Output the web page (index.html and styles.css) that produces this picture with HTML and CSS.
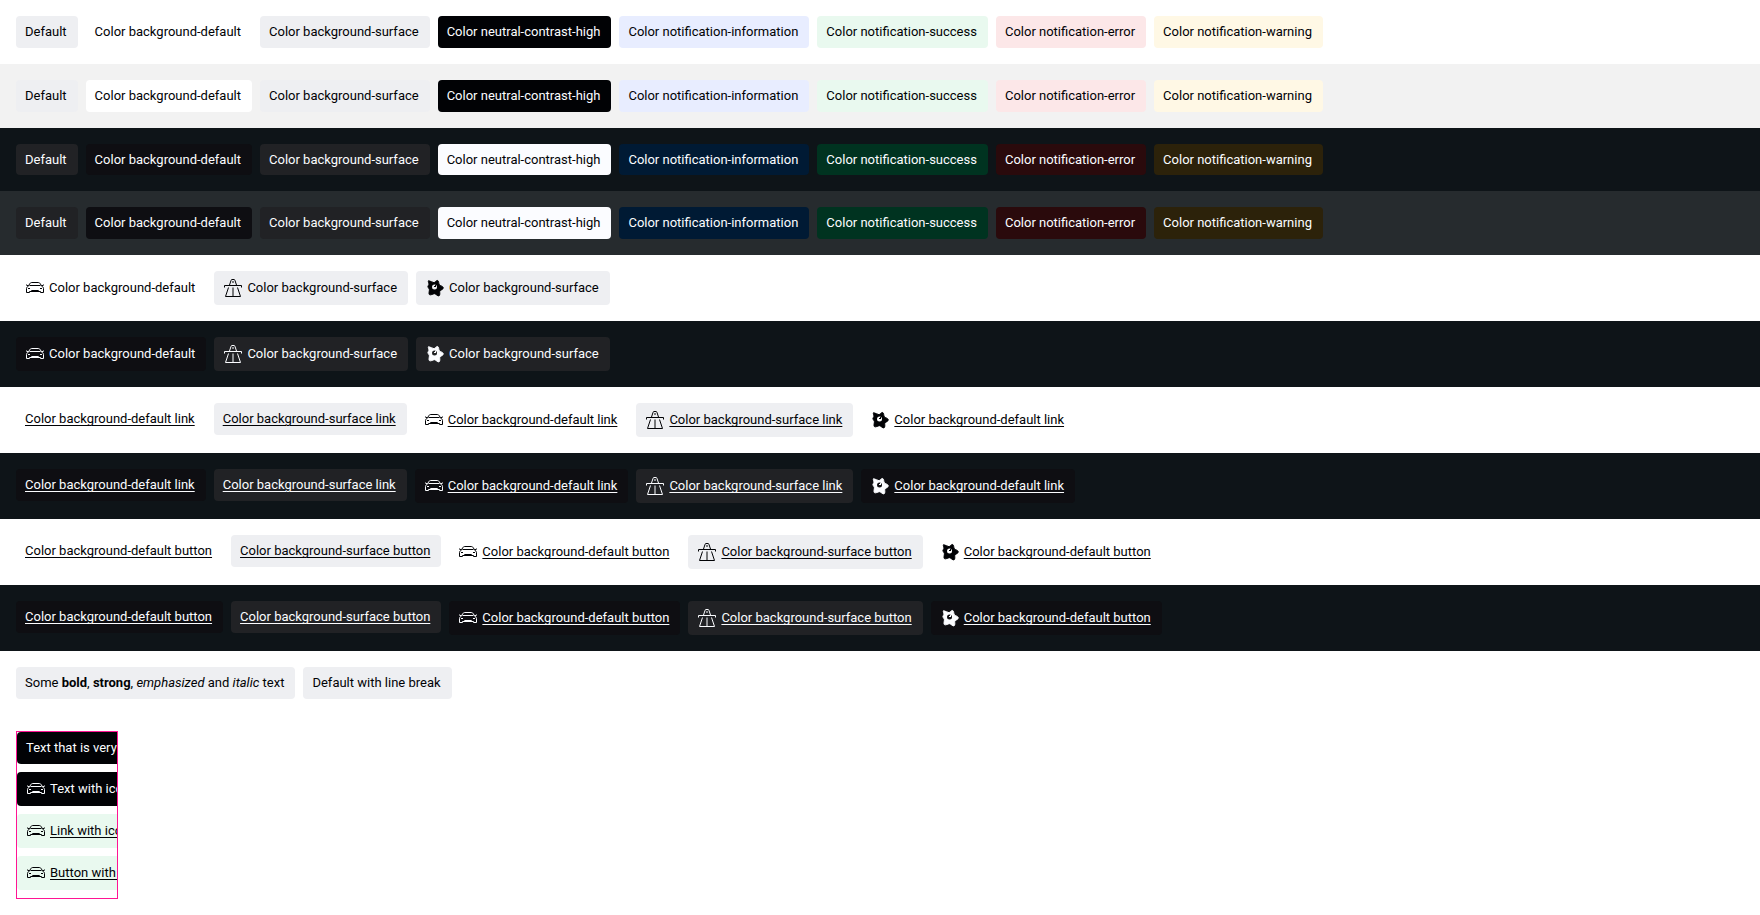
FILE: index.html
```html
<!DOCTYPE html>
<html lang="en">
<head>
<meta charset="utf-8">
<title>Tags</title>
<link rel="stylesheet" href="styles.css">
</head>
<body>
<svg class="sprite" aria-hidden="true">
  <symbol id="car" viewBox="0 0 20 20">
    <path d="M3 8.500 4.800 5.700c.4-.8 1-1.200 1.900-1.200h6.600c.9 0 1.500.4 1.900 1.200L17 8.500M4.500 7.500h11M1 6.800l2.200 1M19 6.800l-2.200 1M3 8.500c-1 .4-1.500 1.100-1.500 2v4h3v-1h11v1h3v-4c0-.9-.5-1.600-1.500-2M3 10.500h2M17 10.500h-2"/>
    <path class="solid" d="M6.500 12h7l.8 2H5.700z"/>
  </symbol>
  <symbol id="highway" viewBox="0 0 20 20">
    <path d="M6.500 7 8 2.500c.2-.7.500-1 1-1h2c.5 0 .8.300 1 1L13.500 7M10 3v2M1.500 9.500v-2h17v2M5.500 9.500l-3 9h15l-3-9M10 9.500v9"/>
  </symbol>
  <symbol id="star" viewBox="0 0 20 20">
    <path class="star-body" d="M3.500 2.700C5.300 3 7.200 4.200 9 4.700c1.300-.4 2.200-2.300 3.600-2.300 1.300.6 1 3.300 1.800 4.500 1.100.8 3.900 1.600 3.900 3s-2.700 2-3.500 3.300c-.2 1.400.5 4-.8 4.700-1.500.3-2.900-1.900-4.500-2.200-1.600.1-3.900 1.800-5.100.9-1-1.300.1-3.300 0-4.900-.2-1.200-1.500-2.100-1.500-3.200.1-1 .9-1.300 1-2.100.1-1.200-1-2.800-.4-3.700z"/>
    <circle class="star-face" cx="9.500" cy="9" r="2.500"/>
    <path class="star-mark" d="M9 8.500h1M10.500 7v2"/>
  </symbol>
</svg>

<main>
  <section class="row light">
    <span class="tag">Default</span>
    <span class="tag default">Color background-default</span>
    <span class="tag">Color background-surface</span>
    <span class="tag high">Color neutral-contrast-high</span>
    <span class="tag info">Color notification-information</span>
    <span class="tag success">Color notification-success</span>
    <span class="tag error">Color notification-error</span>
    <span class="tag warning">Color notification-warning</span>
  </section>
  <section class="row light shaded">
    <span class="tag">Default</span>
    <span class="tag default">Color background-default</span>
    <span class="tag">Color background-surface</span>
    <span class="tag high">Color neutral-contrast-high</span>
    <span class="tag info">Color notification-information</span>
    <span class="tag success">Color notification-success</span>
    <span class="tag error">Color notification-error</span>
    <span class="tag warning">Color notification-warning</span>
  </section>
  <section class="row dark">
    <span class="tag">Default</span>
    <span class="tag default">Color background-default</span>
    <span class="tag">Color background-surface</span>
    <span class="tag high">Color neutral-contrast-high</span>
    <span class="tag info">Color notification-information</span>
    <span class="tag success">Color notification-success</span>
    <span class="tag error">Color notification-error</span>
    <span class="tag warning">Color notification-warning</span>
  </section>
  <section class="row dark shaded">
    <span class="tag">Default</span>
    <span class="tag default">Color background-default</span>
    <span class="tag">Color background-surface</span>
    <span class="tag high">Color neutral-contrast-high</span>
    <span class="tag info">Color notification-information</span>
    <span class="tag success">Color notification-success</span>
    <span class="tag error">Color notification-error</span>
    <span class="tag warning">Color notification-warning</span>
  </section>

  <section class="row light">
    <span class="tag iconic default"><svg class="icon"><use href="#car"/></svg>Color background-default</span>
    <span class="tag iconic"><svg class="icon"><use href="#highway"/></svg>Color background-surface</span>
    <span class="tag iconic"><svg class="icon"><use href="#star"/></svg>Color background-surface</span>
  </section>
  <section class="row dark">
    <span class="tag iconic default"><svg class="icon"><use href="#car"/></svg>Color background-default</span>
    <span class="tag iconic"><svg class="icon"><use href="#highway"/></svg>Color background-surface</span>
    <span class="tag iconic"><svg class="icon"><use href="#star"/></svg>Color background-surface</span>
  </section>

  <section class="row light">
    <span class="tag default"><a class="action" href="#">Color background-default link</a></span>
    <span class="tag"><a class="action" href="#">Color background-surface link</a></span>
    <span class="tag iconic default"><svg class="icon"><use href="#car"/></svg><a class="action" href="#">Color background-default link</a></span>
    <span class="tag iconic"><svg class="icon"><use href="#highway"/></svg><a class="action" href="#">Color background-surface link</a></span>
    <span class="tag iconic default"><svg class="icon"><use href="#star"/></svg><a class="action" href="#">Color background-default link</a></span>
  </section>
  <section class="row dark">
    <span class="tag default"><a class="action" href="#">Color background-default link</a></span>
    <span class="tag"><a class="action" href="#">Color background-surface link</a></span>
    <span class="tag iconic default"><svg class="icon"><use href="#car"/></svg><a class="action" href="#">Color background-default link</a></span>
    <span class="tag iconic"><svg class="icon"><use href="#highway"/></svg><a class="action" href="#">Color background-surface link</a></span>
    <span class="tag iconic default"><svg class="icon"><use href="#star"/></svg><a class="action" href="#">Color background-default link</a></span>
  </section>

  <section class="row light">
    <span class="tag default"><button class="action" type="button">Color background-default button</button></span>
    <span class="tag"><button class="action" type="button">Color background-surface button</button></span>
    <span class="tag iconic default"><svg class="icon"><use href="#car"/></svg><button class="action" type="button">Color background-default button</button></span>
    <span class="tag iconic"><svg class="icon"><use href="#highway"/></svg><button class="action" type="button">Color background-surface button</button></span>
    <span class="tag iconic default"><svg class="icon"><use href="#star"/></svg><button class="action" type="button">Color background-default button</button></span>
  </section>
  <section class="row dark">
    <span class="tag default"><button class="action" type="button">Color background-default button</button></span>
    <span class="tag"><button class="action" type="button">Color background-surface button</button></span>
    <span class="tag iconic default"><svg class="icon"><use href="#car"/></svg><button class="action" type="button">Color background-default button</button></span>
    <span class="tag iconic"><svg class="icon"><use href="#highway"/></svg><button class="action" type="button">Color background-surface button</button></span>
    <span class="tag iconic default"><svg class="icon"><use href="#star"/></svg><button class="action" type="button">Color background-default button</button></span>
  </section>

  <section class="row light">
    <span class="tag"><span>Some <b>bold</b>, <strong>strong</strong>, <em>emphasized</em> and <i>italic</i> text</span></span>
    <span class="tag">Default with line break</span>
  </section>

  <section class="row light">
    <div class="clip">
      <span class="tag high">Text that is very long</span>
      <span class="tag iconic high"><svg class="icon"><use href="#car"/></svg>Text with icon</span>
      <span class="tag iconic success"><svg class="icon"><use href="#car"/></svg><a class="action" href="#">Link with icon</a></span>
      <span class="tag iconic success"><svg class="icon"><use href="#car"/></svg><button class="action" type="button">Button with icon</button></span>
    </div>
  </section>
</main>
</body>
</html>
```
FILE: styles.css
```css
* {
  box-sizing: border-box;
}

body {
  margin: 0;
  background: #fff;
  font-family: Roboto, "Liberation Sans", sans-serif;
  font-size: 13px;
  line-height: 1.83;
}

.sprite {
  display: none;
}

.row {
  display: flex;
  align-items: flex-start;
  gap: 8px;
  padding: 16px;
}

.light {
  --canvas: #fff;
  --text: #010205;
  --default: #fff;
  --surface: #eeeff2;
  --high: #010205;
  --on-high: #fbfcff;
  --info: #e8edff;
  --success: #e9f9ef;
  --error: #fce7e8;
  --warning: #fff8e5;
  background: var(--canvas);
}

.light.shaded {
  --canvas: #f2f2f2;
}

.dark {
  --canvas: #0e1418;
  --text: #fbfcff;
  --default: #0e0e12;
  --surface: #212225;
  --high: #fbfcff;
  --on-high: #010205;
  --info: #001a34;
  --success: #003320;
  --error: #2a0a0c;
  --warning: #2c220a;
  background: var(--canvas);
}

.dark.shaded {
  --canvas: #262b2e;
}

.tag {
  --fill: var(--surface);
  --ink: var(--text);
  display: flex;
  align-items: center;
  flex-shrink: 0;
  gap: 4px;
  padding: 4px 11px 4px 9px;
  border-radius: 4px;
  background: var(--fill);
  color: var(--ink);
  white-space: nowrap;
}

.tag.iconic {
  min-height: 34px;
}

.tag.default {
  --fill: var(--default);
}

.tag.high {
  --fill: var(--high);
  --ink: var(--on-high);
}

.tag.info {
  --fill: var(--info);
}

.tag.success {
  --fill: var(--success);
}

.tag.error {
  --fill: var(--error);
}

.tag.warning {
  --fill: var(--warning);
}

.action {
  padding: 0;
  border: 0;
  background: none;
  color: inherit;
  font: inherit;
  text-decoration: underline;
  text-decoration-thickness: 1px;
  text-underline-offset: 2px;
  cursor: pointer;
}

.icon {
  width: 20px;
  height: 20px;
  fill: none;
  stroke: currentColor;
  stroke-width: 1;
}

.solid {
  fill: currentColor;
  stroke: none;
}

.star-body {
  fill: var(--ink);
  stroke: var(--ink);
  stroke-linejoin: round;
}

.star-face {
  fill: var(--fill);
  stroke: none;
}

.star-mark {
  stroke: var(--ink);
}

.clip {
  display: flex;
  flex-direction: column;
  align-items: flex-start;
  gap: 8px;
  width: 102px;
  padding-bottom: 8px;
  border: 1px solid #ff1493;
  overflow: hidden;
}
```
